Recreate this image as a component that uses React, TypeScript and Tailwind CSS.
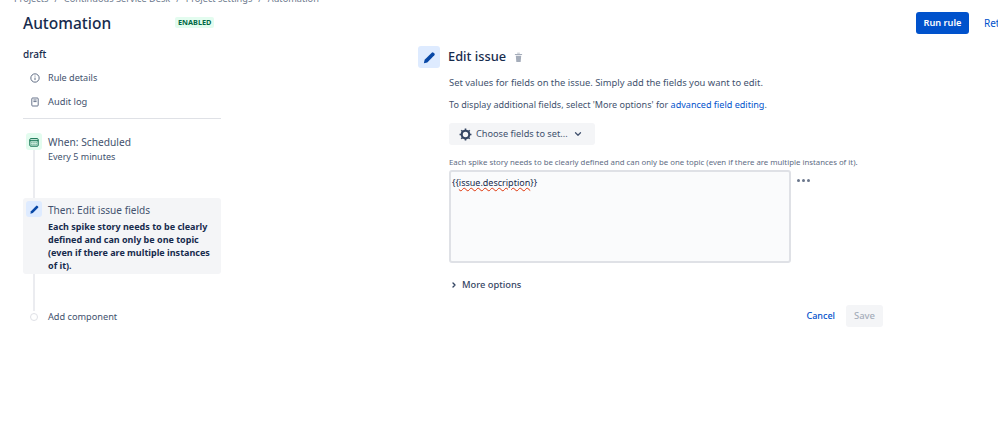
import { ChevronDown, ChevronRight } from 'lucide-react'

function Pencil({ className }: { className: string }) {
  return (
    <svg viewBox="0 0 24 24" className={className} fill="currentColor">
      <path d="M3 21l1.2-5.4L15.6 4.2a2 2 0 0 1 2.8 0l1.4 1.4a2 2 0 0 1 0 2.8L8.4 19.8 3 21z" />
    </svg>
  )
}

function Cog() {
  return (
    <svg viewBox="0 0 24 24" className="w-[13px] h-[13px] text-[#344563]" fill="none" stroke="currentColor" strokeWidth="4">
      <circle cx="12" cy="12" r="7" />
      <path d="M12 1v4M12 19v4M1 12h4M19 12h4M4.2 4.2l2.8 2.8M17 17l2.8 2.8M4.2 19.8L7 17M17 7l2.8-2.8" strokeWidth="3" />
    </svg>
  )
}

const sans = "font-['Noto_Sans','Open_Sans',sans-serif]"

export default function App() {
  return (
    <div className={`w-[998px] h-[442px] overflow-hidden bg-white text-[#172b4d] ${sans}`}>
      {/* Breadcrumbs, cut off by the top of the window */}
      <div className="h-[4px] overflow-hidden pl-[14px] relative">
        <div className="flex gap-[6px] text-[9.2px] leading-[14px] text-[#6b778c] -mt-[8px] whitespace-nowrap">
          <span>Projects</span><span>/</span>
          <span>Continuous Service Desk</span><span>/</span>
          <span>Project settings</span><span>/</span>
          <span>Automation</span>
        </div>
      </div>

      {/* Header */}
      <div className="flex items-start pl-[23px] pt-[8px] h-[42px]">
        <h1 className="text-[15.5px] leading-[22px] font-medium w-[152px]">Automation</h1>
        <span className="mt-[5px] h-[11px] px-[3px] rounded-[2px] bg-[#e3fcef] text-[#006644] text-[7.3px] leading-[11px] font-bold">ENABLED</span>
        <button className="ml-auto w-[53px] h-[22px] rounded-[3px] bg-[#0052cc] text-white text-[9.2px] font-semibold">Run rule</button>
        <span className="ml-[15px] w-[14px] mt-[4px] text-[10px] leading-[14px] text-[#0052cc] overflow-hidden">Ret</span>
      </div>

      <div className="flex">
        {/* Rule sidebar */}
        <div className="w-[198px] ml-[23px] shrink-0 relative">
          <div className="text-[10px] leading-[16px] font-medium">draft</div>

          <div className="flex items-center h-[16px] mt-[8px] text-[9.1px] text-[#42526e]">
            <span className="w-[25px] pl-[7px]">
              <svg viewBox="0 0 12 12" className="w-[10px] h-[10px]" fill="none" stroke="currentColor">
                <circle cx="6" cy="6" r="5" />
                <path d="M6 5.5v3M6 3.2v1" />
              </svg>
            </span>
            Rule details
          </div>
          <div className="flex items-center h-[16px] mt-[8px] text-[9.3px] text-[#42526e]">
            <span className="w-[25px] pl-[8px]">
              <svg viewBox="0 0 10 12" className="w-[8px] h-[10px]" fill="none" stroke="currentColor">
                <rect x="1" y="1" width="8" height="10" rx="1" />
                <path d="M3 3.5h4M3 5.5h4" />
              </svg>
            </span>
            Audit log
          </div>
          <div className="h-px bg-[#dfe1e6] mt-[8px]" />

          {/* Connector behind the steps */}
          <div className="absolute left-[10px] top-[100px] w-[2px] h-[165px] bg-[#ebecf0]" />

          <div className="relative flex pl-[3px] mt-[14px]">
            <span className="w-[16px] h-[17px] rounded-[3px] bg-[#e3fcef] flex items-center justify-center text-[#006644]">
              <svg viewBox="0 0 12 12" className="w-[10px] h-[10px]" fill="none" stroke="currentColor" strokeWidth="1.2">
                <rect x="1" y="2" width="10" height="9" rx="1" />
                <path d="M1 4.5h10M3 6.8h1M5.5 6.8h1M8 6.8h1M3 8.8h1M5.5 8.8h1M8 8.8h1" />
              </svg>
            </span>
            <div className="ml-[6px]">
              <div className="text-[10.2px] leading-[18px] text-[#42526e]">When: Scheduled</div>
              <div className="text-[9px] leading-[13px] text-[#42526e] mt-[-1px]">Every 5 minutes</div>
            </div>
          </div>

          <div className="relative flex mt-[35px] h-[76px] pl-[3px] pt-[3px] rounded-[3px] bg-[#f4f5f7]">
            <span className="w-[16px] h-[16px] rounded-[3px] bg-[#deebff] flex items-center justify-center text-[#0747a6] shrink-0">
              <Pencil className="w-[11px] h-[11px]" />
            </span>
            <div className="ml-[6px]">
              <div className="text-[10.1px] leading-[18px] text-[#42526e]">Then: Edit issue fields</div>
              <div className="text-[9px] leading-[13px] font-bold w-[170px] mt-[1px]">
                Each spike story needs to be clearly defined and can only be one topic (even if there are multiple instances of it).
              </div>
            </div>
          </div>

          <div className="relative flex items-center mt-[36px] h-[14px] pl-[7px]">
            <span className="w-[8px] h-[8px] rounded-full bg-white border border-[#dfe1e6]" />
            <span className="ml-[10px] text-[9.2px] text-[#42526e]">Add component</span>
          </div>
        </div>

        {/* Component editor */}
        <div className="ml-[197px] w-[465px]">
          <div className="flex items-center h-[22px]">
            <span className="w-[22px] h-[22px] rounded-[3px] bg-[#deebff] flex items-center justify-center text-[#0747a6]">
              <Pencil className="w-[15px] h-[15px]" />
            </span>
            <span className="ml-[8px] text-[12.8px] font-medium">Edit issue</span>
            <svg viewBox="0 0 10 12" className="ml-[8px] w-[9px] h-[11px] text-[#a5adba]" fill="currentColor">
              <path d="M1 2h8v1.2H1zM3.5 .6h3v1h-3zM2 4h6l-.6 7H2.6z" />
            </svg>
          </div>

          <div className="pl-[31px]">
            <p className="text-[9.4px] leading-[14px] text-[#42526e] mt-[8px]">Set values for fields on the issue. Simply add the fields you want to edit.</p>
            <p className="text-[9.05px] leading-[14px] text-[#42526e] mt-[8px]">
              To display additional fields, select 'More options' for <span className="text-[#0052cc]">advanced field editing</span>.
            </p>

            <button className="mt-[11px] w-[146px] h-[22px] rounded-[3px] bg-[#f4f5f7] flex items-center pl-[10px] text-[9.2px] text-[#42526e]">
              <Cog />
              <span className="ml-[4px]">Choose fields to set...</span>
              <ChevronDown className="w-[10px] h-[10px] ml-[5px]" strokeWidth={3} />
            </button>

            <div className="mt-[12px] text-[7.8px] leading-[11px] text-[#5e6c84] whitespace-nowrap">
              Each spike story needs to be clearly defined and can only be one topic (even if there are multiple instances of it).
            </div>

            <div className="flex mt-[2px]">
              <div className="w-[342px] h-[93px] border-2 border-[#dfe1e6] rounded-[3px] bg-[#fafbfc] px-[1px] py-[4px] text-[9px] leading-[14px]">
                {'{{'}
                <span className="underline decoration-wavy decoration-[#de350b] decoration-[0.5px]">issue.description</span>
                {'}}'}
              </div>
              <span className="ml-[6px] mt-[7px] h-[6px] flex gap-[2px] items-center">
                <span className="w-[3px] h-[3px] rounded-full bg-[#6b778c]" />
                <span className="w-[3px] h-[3px] rounded-full bg-[#6b778c]" />
                <span className="w-[3px] h-[3px] rounded-full bg-[#6b778c]" />
              </span>
            </div>

            <div className="flex items-center mt-[15px] h-[14px] text-[9.3px] font-medium text-[#344563]">
              <ChevronRight className="w-[8px] h-[8px] ml-[1px]" strokeWidth={4} />
              <span className="ml-[4px]">More options</span>
            </div>

            <div className="flex items-center justify-end mt-[13px] w-[434px]">
              <span className="text-[9px] font-medium text-[#0052cc]">Cancel</span>
              <button className="ml-[11px] w-[37px] h-[22px] rounded-[3px] bg-[#f4f5f7] text-[9.5px] font-medium text-[#a5adba]">Save</button>
            </div>
          </div>
        </div>
      </div>
    </div>
  )
}
